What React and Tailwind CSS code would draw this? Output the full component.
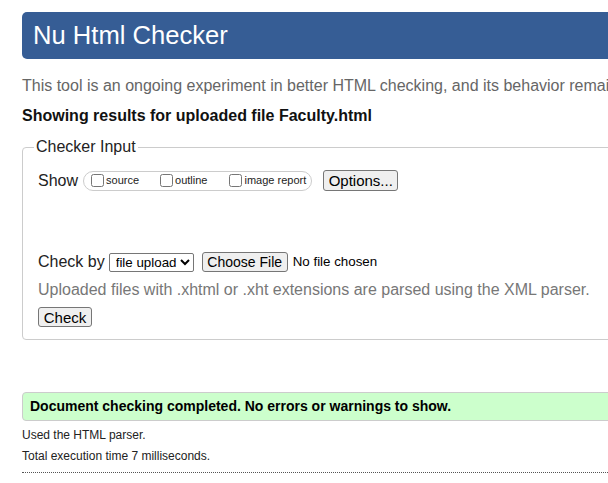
import React from 'react';

const btn = 'h-[20px] border border-[#767676] bg-[#efefef] rounded-[3px] text-[14px] leading-none text-black flex items-center justify-center';

const ShowOption = ({ label, className = '' }) => (
    <label className={`flex items-center ${className}`}>
        <input type="checkbox" className="w-[13px] h-[13px] m-0" />
        <span className="ml-[2px] text-[11px] text-[#222]">{label}</span>
    </label>
);

const App = () => {
    return (
        <div className="w-[608px] h-[483px] overflow-hidden bg-white font-['Liberation_Sans',Arial,sans-serif] text-[#222]">
            <div className="w-[1000px] pl-[22px]">
                {/* Header */}
                <div className="mt-[12px] h-[47px] bg-[#365d95] rounded-l-[5px] pl-[11px] flex items-center">
                    <h1 className="text-white text-[25.6px] leading-none">Nu Html Checker</h1>
                </div>

                <p className="mt-[17px] text-[16px] leading-[20px] text-[#666] whitespace-nowrap">
                    This tool is an ongoing experiment in better HTML checking, and its behavior remains subject to change
                </p>
                <p className="mt-[10px] text-[16px] leading-[20px] font-bold text-[#111]">
                    Showing results for uploaded file Faculty.html
                </p>

                {/* Checker input */}
                <fieldset className="mt-[11px] w-[720px] border border-[#ccc] rounded-[4px] pl-[11px] pb-[12px]">
                    <legend className="px-[2px] text-[16px] leading-[20px] text-[#222]">Checker Input</legend>
                    <div className="pl-[4px]">
                        <div className="mt-[13px] flex items-center h-[21px]">
                            <span className="text-[16px] leading-[20px]">Show</span>
                            <div className="ml-[5px] h-[20px] border border-[#ccc] rounded-[10px] pl-[7px] pr-[5px] flex items-center">
                                <ShowOption label="source" />
                                <ShowOption label="outline" className="ml-[21px]" />
                                <ShowOption label="image report" className="ml-[22px]" />
                            </div>
                            <button className={`${btn} ml-[11px] w-[75px] h-[21px] text-[15px]`}>Options...</button>
                        </div>

                        <div className="mt-[61px] flex items-center h-[20px]">
                            <span className="text-[16px] leading-[20px]">Check by</span>
                            <select className="ml-[4px] w-[85px] h-[19px] border border-[#767676] rounded-[2px] text-[13.33px] text-black pl-[2px]">
                                <option>file upload</option>
                            </select>
                            <button className={`${btn} ml-[8px] w-[86px]`}>Choose File</button>
                            <span className="ml-[5px] text-[13.33px] text-black">No file chosen</span>
                        </div>

                        <p className="mt-[8px] text-[16px] leading-[20px] text-[#777]">
                            Uploaded files with .xhtml or .xht extensions are parsed using the XML parser.
                        </p>
                        <button className={`${btn} mt-[7px] w-[54px] text-[15px]`}>Check</button>
                    </div>
                </fieldset>

                {/* Result */}
                <div className="mt-[52px] w-[720px] h-[29px] bg-[#ccffcc] border border-[#ccc] rounded-[4px] pl-[7px] flex items-center">
                    <span className="text-[14px] font-bold text-black">Document checking completed. No errors or warnings to show.</span>
                </div>
                <p className="mt-[6px] text-[12px] leading-[16px] text-[#222]">Used the HTML parser.</p>
                <p className="mt-[5px] text-[12px] leading-[16px] text-[#222]">Total execution time 7 milliseconds.</p>
                <div className="mt-[8px] w-[720px] border-t border-dotted border-[#555]"></div>
            </div>
        </div>
    );
};

export default App;
